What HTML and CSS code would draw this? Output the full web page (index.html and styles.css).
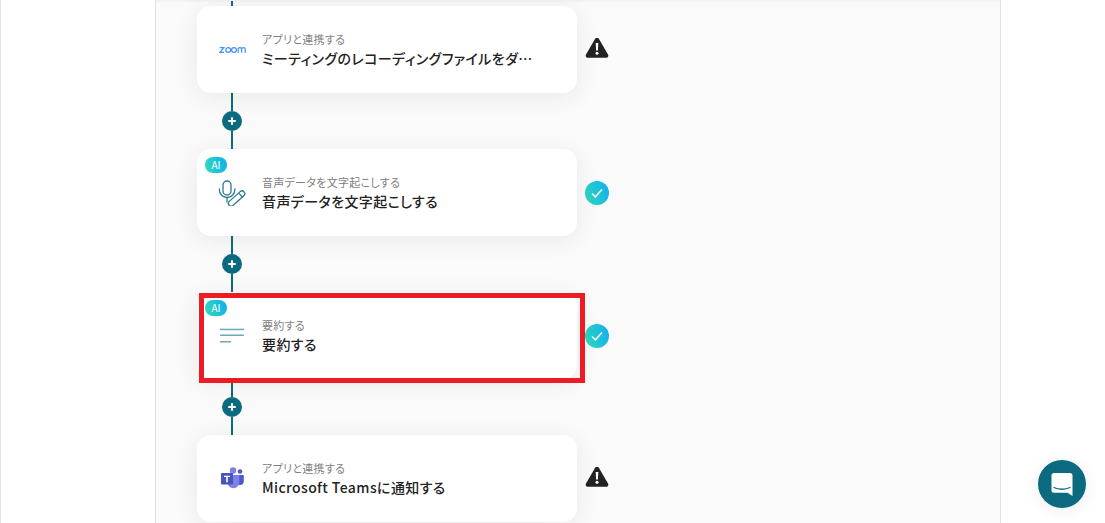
FILE: index.html
```html
<!DOCTYPE html>
<html lang="ja">
<head>
    <meta charset="UTF-8">
    <meta name="viewport" content="width=device-width, initial-scale=1.0">
    <title>フローボット</title>
    <link rel="stylesheet" href="styles.css">
</head>
<body>
<div class="page">
    <div class="panel">
        <div class="line line-top"></div>

        <div class="step">
            <div class="card">
                <div class="card-icon">
                    <svg class="zoom-logo" width="28" height="8" viewBox="0 0 28 8" fill="none" stroke="#4a90f5" stroke-width="1.3">
                        <path d="M.8 1.7h4l-3.800 4.600h4"/>
                        <circle cx="9.200" cy="4" r="2.400"/>
                        <circle cx="15" cy="4" r="2.400"/>
                        <path d="M19.200 6.800V3.200c0-2 3.400-2 3.400 0v3.600M22.600 3.200c0-2 3.600-2 3.600 0v3.600"/>
                    </svg>
                </div>
                <div class="card-text">
                    <div class="card-label">アプリと連携する</div>
                    <div class="card-title tight">ミーティングのレコーディングファイルをダ…</div>
                </div>
            </div>
            <svg class="status" width="24" height="24" viewBox="0 2.500 24 24">
                <path d="M12 2.200c.9 0 1.600.5 2 1.200l9 15.600c.9 1.600-.2 3.300-2 3.300H3c-1.800 0-2.900-1.700-2-3.300l9-15.600c.4-.7 1.100-1.200 2-1.200z" fill="#222"/>
                <path d="M10.700 7.500h2.600l-.4 7.500h-1.800z" fill="#fff"/>
                <circle cx="12" cy="17.800" r="1.500" fill="#fff"/>
            </svg>
        </div>

        <div class="connector">
            <div class="line"></div>
            <div class="plus"></div>
            <div class="line"></div>
        </div>

        <div class="step">
            <div class="card">
                <span class="ai-badge">AI</span>
                <div class="card-icon">
                    <svg width="28" height="28" viewBox="0 0 28 28" fill="none" stroke="#2a7a90" stroke-width="1.300">
                        <rect x="5" y="3" width="8" height="14" rx="4"/>
                        <path d="M1.200 10.500c0 12 15.800 12 15.800 0M9 20v4.500"/>
                        <rect x="8.500" y="17.800" width="20" height="5.500" rx="2.700" transform="rotate(-42 18.500 20.500)"/>
                        <path d="M21 15.500l4 4"/>
                    </svg>
                </div>
                <div class="card-text">
                    <div class="card-label">音声データを文字起こしする</div>
                    <div class="card-title">音声データを文字起こしする</div>
                </div>
            </div>
            <div class="status check">
                <svg width="14" height="14" viewBox="0 0 14 14" fill="none" stroke="#fff" stroke-width="1.500"><path d="M2 7.500l3.400 3.300L12 3.500"/></svg>
            </div>
        </div>

        <div class="connector">
            <div class="line"></div>
            <div class="plus"></div>
            <div class="line"></div>
        </div>

        <div class="step">
            <div class="card">
                <span class="ai-badge alt">AI</span>
                <div class="card-icon">
                    <svg width="26" height="16" viewBox="0 0 26 16" fill="#6fa8b8">
                        <rect x="1" y="1.700" width="24" height="1.500"/>
                        <rect x="1" y="7.500" width="24" height="1.500"/>
                        <rect x="1" y="14" width="11" height="1.500"/>
                    </svg>
                </div>
                <div class="card-text">
                    <div class="card-label">要約する</div>
                    <div class="card-title">要約する</div>
                </div>
            </div>
            <div class="status check alt">
                <svg width="14" height="14" viewBox="0 0 14 14" fill="none" stroke="#fff" stroke-width="1.500"><path d="M2 7.500l3.400 3.300L12 3.500"/></svg>
            </div>
            <div class="highlight"></div>
        </div>

        <div class="connector">
            <div class="line"></div>
            <div class="plus"></div>
            <div class="line"></div>
        </div>

        <div class="step">
            <div class="card">
                <div class="card-icon">
                    <svg width="24" height="22" viewBox="0 0 24 22">
                        <circle cx="20" cy="4.500" r="2.300" fill="#5059c9"/>
                        <path d="M16 8h7a.8.8 0 0 1 .8.800v5.200a3.800 3.800 0 0 1-7.800 0z" fill="#5059c9"/>
                        <circle cx="13" cy="3.500" r="3.200" fill="#7b83eb"/>
                        <path d="M7.500 8h11a.8.8 0 0 1 .8.800v6.500a5.800 5.800 0 0 1-11.800 0z" fill="#7b83eb"/>
                        <rect x="1" y="6" width="12" height="11.500" rx=".8" fill="#4b53bc"/>
                        <path d="M4 8.800h6v1.300H7.800v5.200H6.200v-5.200H4z" fill="#fff"/>
                    </svg>
                </div>
                <div class="card-text">
                    <div class="card-label">アプリと連携する</div>
                    <div class="card-title">Microsoft Teamsに通知する</div>
                </div>
            </div>
            <svg class="status" width="24" height="24" viewBox="0 2.500 24 24">
                <path d="M12 2.200c.9 0 1.600.5 2 1.200l9 15.600c.9 1.600-.2 3.300-2 3.300H3c-1.800 0-2.900-1.700-2-3.300l9-15.600c.4-.7 1.100-1.200 2-1.200z" fill="#222"/>
                <path d="M10.700 7.500h2.600l-.4 7.500h-1.800z" fill="#fff"/>
                <circle cx="12" cy="17.800" r="1.500" fill="#fff"/>
            </svg>
        </div>
    </div>
</div>

<button type="button" class="chat-button" aria-label="チャット">
    <svg width="24" height="24" viewBox="0 0 24 24">
        <path d="M4 1h16a2.500 2.500 0 0 1 2.500 2.500V24l-5-3.200H4a2.500 2.500 0 0 1-2.500-2.500V3.500A2.500 2.500 0 0 1 4 1z" fill="#fff"/>
        <path d="M4 15.500c4 2.300 11.500 2.300 16 0" fill="none" stroke="#0c6a80" stroke-width="1.300" stroke-linecap="round"/>
    </svg>
</button>
</body>
</html>
```

FILE: styles.css
```css
html, body { margin: 0; padding: 0; height: 100%; overflow: hidden; }
body { font-family: "Noto Sans CJK JP", "Noto Sans", sans-serif; background-color: #fff; color: #222; }

.page { height: 523px; padding: 0 104px 0 154px; border-left: 1px solid #e4e4e4; box-sizing: border-box; }
.panel { height: 523px; box-sizing: border-box; padding: 1px 0 0 41px; background-color: #fafafa; border-left: 1px solid #e2e2e2; border-right: 1px solid #e2e2e2; box-shadow: inset 0 3px 3px -2px rgba(0,0,0,0.06); }

.line { width: 2px; background-color: #0c6a80; height: 18px; }
.line-top { height: 5px; margin-left: 34px; }

.connector { display: flex; flex-direction: column; align-items: center; width: 20px; margin-left: 25px; height: 56px; }
.plus { width: 20px; height: 20px; border-radius: 50%; background-color: #0c6a80; position: relative; flex-shrink: 0; }
.plus::before, .plus::after { content: ""; position: absolute; background-color: #fff; border-radius: 1px; }
.plus::before { left: 6px; top: 9px; width: 8px; height: 2px; }
.plus::after { left: 9px; top: 6px; width: 2px; height: 8px; }

.step { display: flex; align-items: center; position: relative; width: 412px; }
.card { position: relative; display: flex; align-items: flex-start; width: 380px; height: 87px; box-sizing: border-box; padding-top: 25px; background-color: #fff; border-radius: 14px; box-shadow: 0 4px 24px rgba(0,0,0,0.07); flex-shrink: 0; }
.card-icon { width: 65px; height: 36px; display: flex; align-items: center; justify-content: center; padding-left: 5px; box-sizing: border-box; flex-shrink: 0; }
.zoom-logo { margin: 1px 0 0 1px; }
.card-text { width: 280px; }
.card-label { font-size: 11px; line-height: 16px; color: #808080; font-feature-settings: "palt"; letter-spacing: 0.3px; }
.card-title { font-size: 14px; line-height: 20px; margin-top: 1px; font-weight: 500; color: #222; white-space: nowrap; font-feature-settings: "palt"; letter-spacing: 0.4px; }
.card-title.tight { letter-spacing: 0.4px; }

.ai-badge { position: absolute; left: 8px; top: 8px; width: 22px; height: 16px; border-radius: 8px; background: linear-gradient(70deg, #30dcb8, #10acf2); color: #fff; font-size: 10px; line-height: 16px; text-align: center; }
.ai-badge.alt { background: linear-gradient(250deg, #10acf2, #30dcb8); }

.status { margin-left: 8px; flex-shrink: 0; }
.check { width: 24px; height: 24px; border-radius: 50%; background: linear-gradient(70deg, #30dcb8, #10acf2); display: flex; align-items: center; justify-content: center; }
.check.alt { background: linear-gradient(250deg, #10acf2, #30dcb8); }

.highlight { position: absolute; left: 2px; top: 1px; width: 386px; height: 90px; box-sizing: border-box; border: 5px solid #ed1c24; }

.chat-button { position: fixed; left: 1038px; top: 460px; width: 48px; height: 48px; padding: 0; border: none; border-radius: 50%; background-color: #0c6a80; display: flex; align-items: center; justify-content: center; box-shadow: 0 2px 16px rgba(0,0,0,0.08); cursor: pointer; }
```
